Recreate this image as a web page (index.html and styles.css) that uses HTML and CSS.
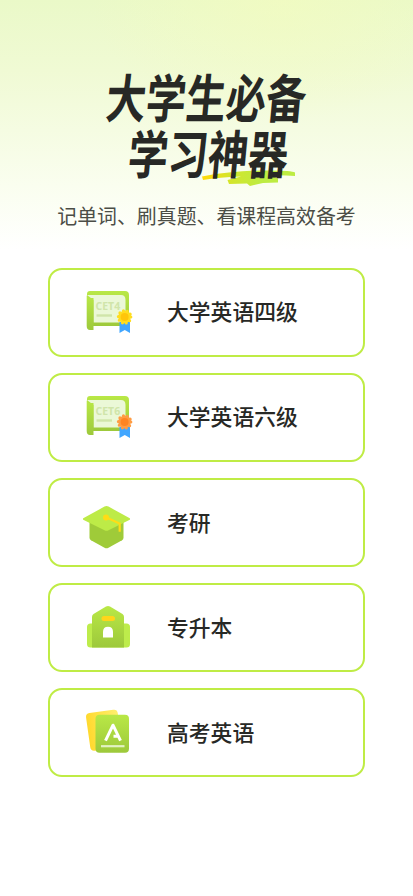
FILE: index.html
```
<!DOCTYPE html>
<html lang="zh-CN">
<head>
    <meta charset="UTF-8">
    <meta name="viewport" content="width=device-width, initial-scale=1.0">
    <title>大学生必备学习神器</title>
    <link rel="stylesheet" href="styles.css">
</head>
<body>
    <div class="page">
        <div class="header">
            <div class="title-wrap">
                <svg class="brush" width="96" height="20" viewBox="0 0 96 20">
                    <defs>
                        <linearGradient id="brush" gradientUnits="userSpaceOnUse" x1="2" y1="0" x2="60" y2="0">
                            <stop offset="0" stop-color="#ffda0a"/>
                            <stop offset=".45" stop-color="#d5e52a"/>
                            <stop offset="1" stop-color="#bdec42"/>
                        </linearGradient>
                    </defs>
                    <path d="M1 8.500Q30 3 60 2.500T94 4.500V8Q80 7 70 7.500L77 10.500V14.500L62 15L49 18L46 15.500L28 16L26.500 12L40 8.500Q18 9 2 12Z" fill="url(#brush)"/>
                </svg>
                <h1>
                    <span class="line">大学生必备</span>
                    <span class="line line-second">学习神器</span>
                </h1>
            </div>
            <p>记单词、刷真题、看课程高效备考</p>
        </div>
        <div class="list">
            <button class="item">
                <svg class="icon" width="60" height="60" viewBox="0 0 60 60">
                    <defs>
                        <linearGradient id="green" x1="0" y1="0" x2="0" y2="1">
                            <stop offset="0" stop-color="#b9e846"/>
                            <stop offset="1" stop-color="#9dc93b"/>
                        </linearGradient>
                        <linearGradient id="yellow" x1="0" y1="0" x2="1" y2="0">
                            <stop offset="0" stop-color="#ffd92e"/>
                            <stop offset="1" stop-color="#ffef6e"/>
                        </linearGradient>
                    </defs>
                    <path d="M10 7H45Q49 7 49 11V42H13V14H7V10Q7 7 10 7Z" fill="url(#green)"/>
                    <path d="M7 11H41Q45.500 11 45.500 16V38.500H13.500V16Z" fill="#ebf8d7"/>
                    <path d="M6.700 11Q7 14 10 14H13.500V46H10Q6.700 46 6.700 42Z" fill="url(#green)"/>
                    <text class="cet" x="15.500" y="26">CET4</text>
                    <path d="M16.500 31.500H32" stroke="#d0e5aa" stroke-width="2.400"/>
                    <path d="M39.500 38H50V49L44.750 46L39.500 49Z" fill="#41a6ff"/>
                    <circle class="seal seal-gold" cx="44.600" cy="33" r="6.200"/>
                    <circle cx="44.600" cy="33" r="4" fill="#ffc50b"/>
                </svg>
                <span>大学英语四级</span>
            </button>
            <button class="item">
                <svg class="icon" width="60" height="60" viewBox="0 0 60 60">
                    <path d="M10 7H45Q49 7 49 11V42H13V14H7V10Q7 7 10 7Z" fill="url(#green)"/>
                    <path d="M7 11H41Q45.500 11 45.500 16V38.500H13.500V16Z" fill="#ebf8d7"/>
                    <path d="M6.700 11Q7 14 10 14H13.500V46H10Q6.700 46 6.700 42Z" fill="url(#green)"/>
                    <text class="cet" x="15.500" y="26">CET6</text>
                    <path d="M16.500 31.500H32" stroke="#d0e5aa" stroke-width="2.400"/>
                    <path d="M39.500 38H50V49L44.750 46L39.500 49Z" fill="#41a6ff"/>
                    <circle class="seal seal-orange" cx="44.600" cy="33" r="6.200"/>
                    <circle cx="44.600" cy="33" r="4" fill="#ff8422"/>
                </svg>
                <span>大学英语六级</span>
            </button>
            <button class="item">
                <svg class="icon" width="60" height="60" viewBox="0 -1.300 60 60">
                    <path d="M9.500 22H43.500V41.500Q43.500 43 42 44L28.500 51.500Q26.500 52.500 24.500 51.500L11 44Q9.500 43 9.500 41.500Z" fill="#9fcb39"/>
                    <path d="M3.200 22L24.500 10.300Q26.500 9.200 28.500 10.300L49.800 22Q50.500 22.800 49.800 23.500L28.500 34Q26.500 35 24.500 34L3.200 23.500Q2.500 22.800 3.200 22Z" fill="#bdeb47"/>
                    <path d="M26 21L39.700 27.300V35.500" fill="none" stroke="#ffdc16" stroke-width="2.200"/>
                    <circle cx="26" cy="21.300" r="3" fill="#ffdc16"/>
                </svg>
                <span>考研</span>
            </button>
            <button class="item">
                <svg class="icon" width="60" height="60" viewBox="0 0 60 60">
                    <rect x="7" y="23.500" width="43" height="24" rx="3.500" fill="#bdec4b"/>
                    <path d="M12 47.500V17Q12 15 13.500 14L26 6.500Q28 5.300 30 6.500L42.500 14Q44 15 44 17V47.500Z" fill="url(#green)"/>
                    <rect x="21.500" y="16" width="13.500" height="5" rx="2.500" fill="#ffd51a"/>
                    <path d="M23 37.500V32Q23 26.700 28 26.700T33 32V37.500Z" fill="#fff"/>
                </svg>
                <span>专升本</span>
            </button>
            <button class="item">
                <svg class="icon" width="60" height="60" viewBox="0 2.800 60 60">
                    <rect x="8" y="9" width="32" height="38" rx="4" transform="rotate(-8 24 28)" fill="url(#yellow)"/>
                    <rect x="15.500" y="12.500" width="33.500" height="38" rx="4" fill="url(#green)"/>
                    <path d="M25.500 38.500L33 23L40.500 38.500M33.500 34H38" fill="none" stroke="#fff" stroke-width="3" stroke-linejoin="round"/>
                    <path d="M21 44H44.500" stroke="#e2f2c3" stroke-width="2.200"/>
                </svg>
                <span>高考英语</span>
            </button>
        </div>
    </div>
</body>
</html>
```
FILE: styles.css
```
* { margin: 0; padding: 0; box-sizing: border-box; }
body {
    font-family: "Noto Sans CJK SC", "Noto Sans", sans-serif;
    background: #fff;
    color: #272825;
}
.page {
    min-height: 896px;
    padding: 68px 48px 0;
    background:
        radial-gradient(ellipse 190px 120px at 280px 0, rgba(244,252,190,0.6), rgba(244,252,190,0)),
        linear-gradient(180deg, #eaf9c8 0, #f0fad4 70px, #f5fce2 130px, #fafeef 185px, #fff 250px);
    background-repeat: no-repeat;
}
.header { text-align: center; height: 199.700px; }
.title-wrap { position: relative; height: 112px; }
.title-wrap h1 {
    position: relative;
    font-size: 40px;
    line-height: 56px;
    font-weight: 700;
}
.line {
    display: block;
    transform: scaleY(1.300) skewX(-7deg);
}
.line-second { padding-left: 4px; }
.brush { position: absolute; left: 153px; top: 100px; }
.header p {
    margin: 22px -10px 0;
    font-size: 19.900px;
    line-height: 28px;
    color: #4b4d46;
    white-space: nowrap;
}
.list { display: flex; flex-direction: column; gap: 16.200px; }
.item {
    display: flex;
    align-items: center;
    height: 89px;
    padding: 0 0 3px 30px;
    border: 2px solid #bfec45;
    border-radius: 14px;
    background: #fff;
    font-family: inherit;
    font-size: 21.800px;
    font-weight: 500;
    color: #272825;
    cursor: pointer;
}
.icon { flex: none; margin: 7px 27px 0 0; }
.cet {
    font-family: "Noto Sans", sans-serif;
    font-size: 10.500px;
    font-weight: 700;
    fill: #d0e5aa;
}
.seal { stroke-width: 3.200; stroke-linecap: round; stroke-dasharray: 0 3.896; }
.seal-gold { fill: #ffdd20; stroke: #ffdd20; }
.seal-orange { fill: #ff9c43; stroke: #ff9c43; }
```
